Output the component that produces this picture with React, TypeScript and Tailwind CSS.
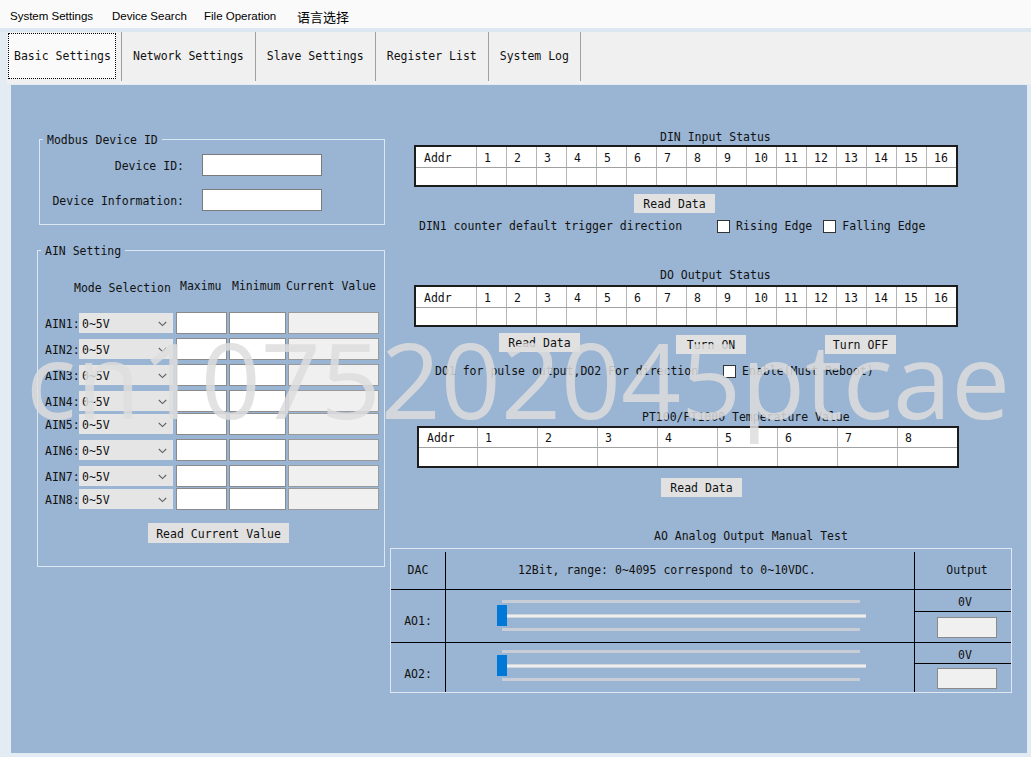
import React from "react";

const MONO = "font-['DejaVu_Sans_Mono',monospace] text-[11.5px] leading-[14px] text-[#111]";

function Btn({ className, children }: { className: string; children: React.ReactNode }) {
  return (
    <div className={"flex items-center justify-center bg-[#e1e1e1] whitespace-nowrap " + className}>
      {children}
    </div>
  );
}

function Check() {
  return <div className="w-[13px] h-[13px] bg-white border border-[#333]" />;
}

function Chevron() {
  return (
    <svg width="9" height="6" viewBox="0 0 9 6">
      <path d="M0.8 1 L4.5 4.6 L8.2 1" fill="none" stroke="#606060" strokeWidth="1.1" />
    </svg>
  );
}

function StatusTable({
  count,
  addrW,
  colW,
  headH,
  dataH,
  className,
}: {
  count: number;
  addrW: string;
  colW: string;
  headH: string;
  dataH: string;
  className: string;
}) {
  const nums = Array.from({ length: count }, (_, i) => i + 1);
  return (
    <div className={"border-2 border-[#1c1c1c] bg-white " + className}>
      <div className={"flex " + headH}>
        <div className={"flex items-center pl-[8px] pt-[1px] " + addrW}>Addr</div>
        {nums.map((n) => (
          <div key={n} className={"flex items-center pl-[7px] pt-[1px] border-l border-[#b4b4b4] " + colW}>
            {n}
          </div>
        ))}
      </div>
      <div className={"flex border-t border-[#a0a0a0] " + dataH}>
        <div className={addrW} />
        {nums.map((n) => (
          <div key={n} className={"border-l border-[#b4b4b4] " + colW} />
        ))}
      </div>
    </div>
  );
}

const AIN_ROWS = [
  { name: "AIN1:", mt: "mt-0" },
  { name: "AIN2:", mt: "mt-[4px]" },
  { name: "AIN3:", mt: "mt-[4px]" },
  { name: "AIN4:", mt: "mt-[4px]" },
  { name: "AIN5:", mt: "mt-[1px]" },
  { name: "AIN6:", mt: "mt-[4px]" },
  { name: "AIN7:", mt: "mt-[4px]" },
  { name: "AIN8:", mt: "mt-[1px]" },
];

function Slider({ pt, thumbTop }: { pt: string; thumbTop: string }) {
  return (
    <div className={"relative w-[468px] " + pt}>
      <div className="ml-[56px] w-[358px] h-[3px] bg-[#c9ced6]" />
      <div className="ml-[56px] mt-[11px] w-[364px] h-[4px] bg-[#eceef1] border-y border-[#d2d6db]" />
      <div className="ml-[56px] mt-[10px] w-[358px] h-[3px] bg-[#c9ced6]" />
      <div className={"absolute left-[51px] w-[10px] h-[21px] bg-[#0078d7] " + thumbTop} />
    </div>
  );
}

export default function App() {
  return (
    <div className="relative w-[1031px] h-[757px] overflow-hidden bg-[#e3ebf3]">
      {/* menu bar */}
      <div className="flex h-[28px] items-center bg-[#fafafa] pt-[5px] font-['Liberation_Sans','Noto_Sans_CJK_SC',sans-serif] text-[11.5px] text-black">
        <div className="ml-[10px] w-[102px]">System Settings</div>
        <div className="w-[92px]">Device Search</div>
        <div className="w-[93px]">File Operation</div>
        <div className="text-[13px] font-['Noto_Sans_CJK_SC',sans-serif]">语言选择</div>
      </div>
      <div className="h-[4px] bg-[#dde7f1]" />

      {/* tab strip */}
      <div className={"ml-[7px] flex h-[52px] items-start bg-[#f0f0f0] " + MONO}>
        <div className="ml-[1px] mt-[1px] flex h-[46px] w-[108px] items-center border border-dotted border-black bg-[#fafafa] pl-[5px]">
          Basic Settings
        </div>
        <div className="ml-[5px] h-[49px] w-px bg-[#a0a0a0]" />
        <div className="flex h-[48px] items-center px-[11px]">Network Settings</div>
        <div className="h-[49px] w-px bg-[#a0a0a0]" />
        <div className="flex h-[48px] items-center px-[11px]">Slave Settings</div>
        <div className="h-[49px] w-px bg-[#a0a0a0]" />
        <div className="flex h-[48px] items-center px-[11px]">Register List</div>
        <div className="h-[49px] w-px bg-[#a0a0a0]" />
        <div className="flex h-[48px] items-center px-[11px]">System Log</div>
        <div className="h-[49px] w-px bg-[#a0a0a0]" />
      </div>

      {/* tab page */}
      <div className={"ml-[11px] mr-[4px] mt-[1px] flex h-[668px] items-start bg-[#9ab5d3] " + MONO}>
        {/* left column */}
        <div className="ml-[26px] w-[348px]">
          {/* Modbus Device ID */}
          <div className="relative ml-[2px] mt-[54px] w-[346px] border border-[#dde7f2] pt-[14px] pb-[13px]">
            <span className="absolute -top-[7px] left-[3px] bg-[#9ab5d3] px-[4px]">Modbus Device ID</span>
            <div className="flex items-center">
              <div className="w-[144px] pt-[2px] text-right">Device ID:</div>
              <div className="ml-[18px] h-[22px] w-[120px] border border-[#7a7a7a] bg-white" />
            </div>
            <div className="mt-[13px] flex items-center">
              <div className="w-[144px] pt-[1px] text-right">Device Information:</div>
              <div className="ml-[18px] h-[22px] w-[120px] border border-[#7a7a7a] bg-white" />
            </div>
          </div>

          {/* AIN Setting */}
          <div className="relative mt-[25px] w-[348px] border border-[#dde7f2] pt-[28px] pb-[23px]">
            <span className="absolute -top-[7px] left-[3px] bg-[#9ab5d3] px-[4px]">AIN Setting</span>
            <div className="flex h-[15px] items-start whitespace-nowrap">
              <div className="ml-[36px] w-[106px] pt-[2px]">Mode Selection</div>
              <div className="w-[52px]">Maximu</div>
              <div className="w-[54px]">Minimum</div>
              <div>Current Value</div>
            </div>
            <div className="mt-[18px] pl-[7px]">
              {AIN_ROWS.map((r) => (
                <div key={r.name} className={"flex h-[22px] items-center " + r.mt}>
                  <div className="w-[34px] pt-[1px]">{r.name}</div>
                  <div className="flex h-[20px] w-[94px] items-center justify-between bg-[#e5e5e5] pl-[3px] pr-[6px] pt-[1px]">
                    <span>0~5V</span>
                    <Chevron />
                  </div>
                  <div className="ml-[3px] h-[22px] w-[51px] border border-[#8a8a8a] bg-white" />
                  <div className="ml-[2px] h-[22px] w-[57px] border border-[#8a8a8a] bg-white" />
                  <div className="ml-[2px] h-[22px] w-[91px] border border-[#9a9a9a] bg-[#f0f0f0]" />
                </div>
              ))}
            </div>
            <Btn className="ml-[110px] mt-[13px] h-[20px] w-[141px] pt-[1px]">Read Current Value</Btn>
          </div>
        </div>

        {/* right column */}
        <div className="ml-[5px] w-[622px] whitespace-nowrap">
          <div className="ml-[270px] mt-[45px]">DIN Input Status</div>
          <StatusTable
            count={16}
            addrW="w-[60px]"
            colW="w-[30px]"
            headH="h-[20px]"
            dataH="h-[18px]"
            className="ml-[24px] mt-[1px] w-[544px]"
          />
          <Btn className="ml-[244px] mt-[7px] h-[19px] w-[81px]">Read Data</Btn>
          <div className="ml-[29px] mt-[6px] flex h-[14px] items-center">
            <span>DIN1 counter default trigger direction</span>
            <div className="ml-[35px]">
              <Check />
            </div>
            <span className="ml-[6px]">Rising Edge</span>
            <div className="ml-[11px]">
              <Check />
            </div>
            <span className="ml-[6px]">Falling Edge</span>
          </div>

          <div className="ml-[270px] mt-[35px]">DO Output Status</div>
          <StatusTable
            count={16}
            addrW="w-[60px]"
            colW="w-[30px]"
            headH="h-[20px]"
            dataH="h-[18px]"
            className="ml-[24px] mt-[3px] w-[544px]"
          />
          <div className="mt-[6px] flex items-start">
            <Btn className="ml-[109px] h-[19px] w-[81px]">Read Data</Btn>
            <Btn className="ml-[96px] mt-[2px] h-[19px] w-[70px]">Turn ON</Btn>
            <Btn className="ml-[79px] mt-[2px] h-[19px] w-[71px]">Turn OFF</Btn>
          </div>
          <div className="ml-[45px] mt-[10px] flex h-[14px] items-center">
            <span>DO1 for pulse output,DO2 For direction</span>
            <div className="ml-[25px]">
              <Check />
            </div>
            <span className="ml-[6px]">Enable(Must Reboot)</span>
          </div>

          <div className="ml-[252px] mt-[32px]">PT100/PT1000 Temperature Value</div>
          <StatusTable
            count={8}
            addrW="w-[58px]"
            colW="w-[60px]"
            headH="h-[19px]"
            dataH="h-[19px]"
            className="ml-[27px] mt-[2px] w-[542px]"
          />
          <Btn className="ml-[271px] mt-[10px] h-[19px] w-[81px]">Read Data</Btn>

          <div className="ml-[264px] mt-[32px]">AO Analog Output Manual Test</div>
          <div className="mt-[5px] w-[622px] border border-[#dfe8f2]">
            {/* header */}
            <div className="flex h-[41px] border-b border-black">
              <div className="flex w-[54px] items-center justify-center pt-[1px]">DAC</div>
              <div className="mt-[3px] w-px bg-black" />
              <div className="flex w-[468px] items-center pl-[72px] pt-[1px]">12Bit, range: 0~4095 correspond to 0~10VDC.</div>
              <div className="mt-[3px] w-px bg-black" />
              <div className="flex w-[96px] items-center justify-center pl-[8px] pt-[1px]">Output</div>
            </div>
            {/* AO1 */}
            <div className="flex h-[53px] border-b border-black">
              <div className="flex w-[54px] items-center justify-center pt-[10px]">AO1:</div>
              <div className="w-px bg-black" />
              <Slider pt="pt-[10px]" thumbTop="top-[15px]" />
              <div className="w-px bg-black" />
              <div className="w-[96px]">
                <div className="flex h-[22px] items-center justify-center border-b border-black pl-[4px] pt-[3px]">0V</div>
                <div className="ml-[22px] mt-[5px] h-[21px] w-[60px] border border-[#8a8a8a] bg-[#f0f0f0]" />
              </div>
            </div>
            {/* AO2 */}
            <div className="flex h-[49px]">
              <div className="flex w-[54px] items-center justify-center pt-[13px]">AO2:</div>
              <div className="w-px bg-black" />
              <Slider pt="pt-[7px]" thumbTop="top-[12px]" />
              <div className="w-px bg-black" />
              <div className="w-[96px]">
                <div className="flex h-[21px] items-center justify-center border-b border-black pl-[4px] pt-[3px]">0V</div>
                <div className="ml-[22px] mt-[4px] h-[21px] w-[60px] border border-[#8a8a8a] bg-[#f0f0f0]" />
              </div>
            </div>
          </div>
        </div>
      </div>

      {/* watermark */}
      <div className="pointer-events-none absolute left-[26px] top-[327px] whitespace-nowrap font-['Open_Sans',sans-serif] text-[105px] leading-[104px] text-[#dedede] opacity-85">
        cn1075202045ptcae
      </div>
    </div>
  );
}
